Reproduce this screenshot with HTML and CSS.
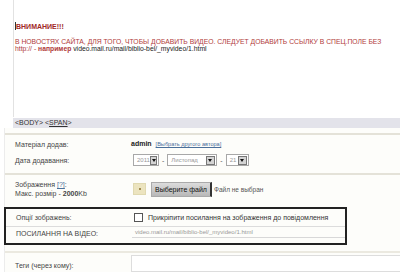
FILE: index.html
```html
<!DOCTYPE html>
<html>
<head>
  <meta charset="UTF-8">
  <title>Додати новину</title>
  <link rel="stylesheet" href="styles.css">
</head>
<body>

  <div class="page">
    <div class="editor">
      <p class="warn-title"><span class="caret"></span>ВНИМАНИЕ!!!</p>
      <p class="warn-text">В НОВОСТЯХ САЙТА, ДЛЯ ТОГО, ЧТОБЫ ДОБАВИТЬ ВИДЕО. СЛЕДУЕТ ДОБАВИТЬ ССЫЛКУ В СПЕЦ.ПОЛЕ БЕЗ<br>http:// - <b>например</b> <span class="url">video.mail.ru/mail/biblio-bel/_myvideo/1.html</span></p>
    </div>
    <div class="pathbar">&lt;BODY&gt; &lt;<u>SPAN</u>&gt;</div>

    <div class="form">
      <div class="group first">
        <div class="row">
          <div class="label">Матеріал додав:</div>
          <div class="ctrl author-line"><b class="author">admin</b> <a class="small-link">[Выбрать другого автора]</a></div>
        </div>
        <div class="row">
          <div class="label">Дата додавання:</div>
          <div class="ctrl">
            <span class="select w-year"><span class="val">2011</span><span class="arrow"></span></span>
            <span class="dash">-</span>
            <span class="select w-month"><span class="val">Листопад</span><span class="arrow"></span></span>
            <span class="dash">-</span>
            <span class="select w-day"><span class="val">21</span><span class="arrow"></span></span>
          </div>
        </div>
      </div>

      <div class="group image">
        <div class="row">
          <div class="label">Зображення <a class="help">[?]</a>:<br>Макс. розмір - <b>2000</b>Kb</div>
          <div class="ctrl">
            <span class="mini-btn"><span class="dot"></span></span>
            <span class="file-btn">Выберите файл</span>
            <span class="file-none">Файл не выбран</span>
          </div>
        </div>
      </div>

      <div class="video-box">
        <div class="row opts">
          <div class="label">Опції зображень:</div>
          <div class="ctrl"><span class="checkbox"></span>Прикріпити посилання на зображення до повідомлення</div>
        </div>
        <div class="row link">
          <div class="label">ПОСИЛАННЯ НА ВІДЕО:</div>
          <div class="ctrl"><span class="input">video.mail.ru/mail/biblio-bel/_myvideo/1.html</span></div>
        </div>
      </div>

      <div class="group tags">
        <div class="row">
          <div class="label">Теги (через кому):</div>
          <div class="ctrl"><span class="input tall"></span></div>
        </div>
      </div>
    </div>
  </div>

</body>
</html>
```

FILE: styles.css
```css
body { margin: 0; background: #fff; font-family: "Liberation Sans", Arial, sans-serif; font-size: 7px; color: #333; overflow: hidden; }
.page { height: 272px; overflow: hidden; }

.editor { margin-left: 13px; height: 117px; border-left: 1px solid #e2e2e2; padding: 22px 0 0 1px; box-sizing: border-box; white-space: nowrap; }
.editor p { margin: 0; }
.warn-title { color: #a02828; font-weight: bold; font-size: 7px; line-height: 8px; margin-bottom: 7px !important; }
.caret { display: inline-block; width: 1px; height: 8px; background: #333; vertical-align: -1px; }
.warn-text { color: #b03a3a; font-size: 6.8px; line-height: 7px; }
.warn-text .url { color: #222; }

.pathbar { margin: 1px 0 0 13px; height: 10px; line-height: 10px; background: #e3e3ea; color: #333; padding-left: 2px; font-size: 7px; }

.form { border-left: 1px solid #ececec; margin-left: 4px; background: #fdfdfa; height: 144px; padding-top: 5px; box-sizing: border-box; }
.group { border-top: 2px solid #e4e2d8; }
.group.first { padding: 1px 0 5px; }
.group.image { padding: 4px 0 0; }
.row { display: grid; grid-template-columns: 126px 1fr; align-items: center; height: 16px; }
.group.image .row { height: 20px; }
.label { padding-left: 10px; color: #444; line-height: 9px; white-space: nowrap; }
.ctrl { display: flex; align-items: center; justify-content: flex-start; gap: 3px; white-space: nowrap; min-width: 0; }
.ctrl.author-line { display: block; text-align: left; line-height: 9px; }

.author { color: #222; font-weight: bold; }
.small-link { color: #4a6f9a; font-size: 5.6px; text-decoration: underline; margin-left: 2px; }

.select { display: inline-flex; align-items: center; justify-content: space-between; height: 10px; border: 1px solid #a8a8a8; background: #fff; padding: 0 1px 0 3px; color: #999; font-size: 6px; }
.w-year { width: 20px; margin-left: 2px; }
.w-month { width: 44px; }
.w-day { width: 17px; }
.arrow { width: 9px; height: 9px; background: #d4d4d4; border: 1px solid #777; box-sizing: border-box; position: relative; }
.arrow::after { content: ""; position: absolute; left: 1px; top: 2px; border-left: 2.5px solid transparent; border-right: 2.5px solid transparent; border-top: 3px solid #111; }
.dash { color: #555; }

.help { color: #4a6f9a; text-decoration: underline; }
.mini-btn { width: 11px; height: 10px; background: #ece4bf; border: 1px solid #e0d9b0; display: inline-flex; align-items: center; justify-content: center; margin: 0 2px 0 2px; }
.dot { width: 2px; height: 2px; background: #a08c50; }
.file-btn { height: 13px; line-height: 13px; padding: 0 3px; background: linear-gradient(#dcdcdc, #b8b8b8); border: 1px solid #aaa; border-right: 2px solid #333; color: #111; font-size: 7px; }
.file-none { color: #555; font-size: 6.5px; margin-left: -1px; }

.video-box { border: 2px solid #222; width: 343px; height: 38px; box-sizing: border-box; margin: 8px 0 0 -1px; }
.video-box .row.opts { height: 17px; border-bottom: 1px solid #dcdcdc; }
.video-box .row.link { height: 12px; }
.checkbox { width: 7px; height: 7px; border: 1px solid #555; background: #fff; display: inline-block; margin: 0 2px 0 2px; }
.input { display: block; width: 272px; height: 11px; line-height: 11px; border-bottom: 1px solid #d8d8d8; color: #999; font-size: 6px; padding-left: 3px; }
.video-box .link .ctrl { margin-top: -2px; }
.video-box .input { border-top: 1px solid #dcdcdc; height: 10px; line-height: 10px; }

.group.tags { margin-top: 6px; padding-top: 2px; border-top: 2px solid #ebe9e0; }
.group.tags .row { height: 17px; align-items: start; }
.group.tags .label { margin-top: 6px; }
.input.tall { height: 17px; width: 270px; border: 1px solid #ddd; border-right: none; background: #fff; box-sizing: border-box; }
```
